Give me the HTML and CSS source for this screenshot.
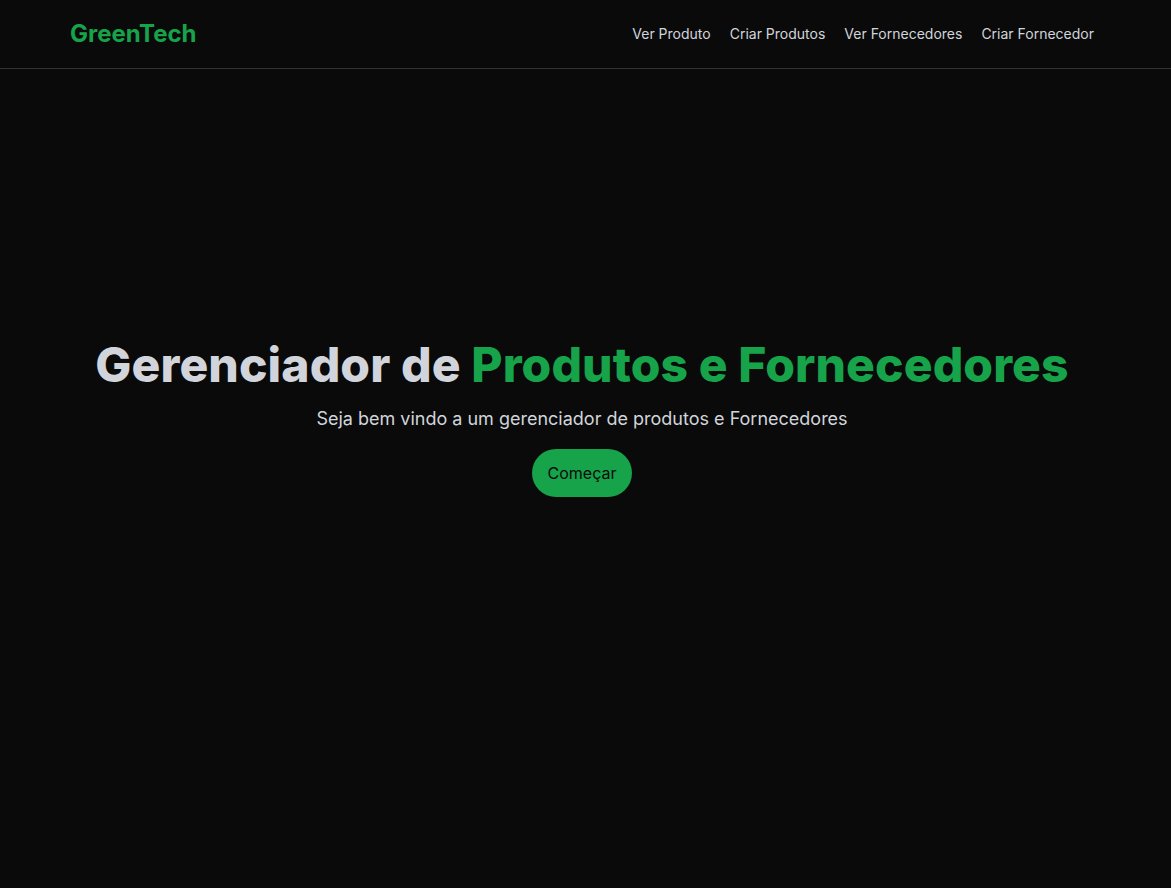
FILE: index.html
```html
<!DOCTYPE html>
<html lang="pt">
<head>
<meta charset="utf-8">
<title>GreenTech</title>
<link rel="stylesheet" href="styles.css">
</head>
<body>
<div class="page">
  <header class="header">
    <a class="logo" href="#">GreenTech</a>
    <nav class="nav">
      <a href="#">Ver Produto</a>
      <a href="#">Criar Produtos</a>
      <a href="#">Ver Fornecedores</a>
      <a href="#">Criar Fornecedor</a>
    </nav>
  </header>
  <main class="hero">
    <h1 class="title">Gerenciador de <span class="accent">Produtos e Fornecedores</span></h1>
    <p class="subtitle">Seja bem vindo a um gerenciador de produtos e Fornecedores</p>
    <a class="btn" href="#">Começar</a>
  </main>
</div>
</body>
</html>
```

FILE: styles.css
```css
* { box-sizing: border-box; }
html, body { margin: 0; padding: 0; }
body {
  background: #0a0a0a;
  color: #d1d5db;
  font-family: Inter, "Noto Sans", sans-serif;
  min-height: 100vh;
}
a { text-decoration: none; color: inherit; }
.page {
  margin-right: 7px;
}
.header {
  height: 69px;
  display: flex;
  align-items: center;
  justify-content: space-between;
  padding: 0 77px 0 70px;
  border-bottom: 1px solid #333333;
  margin-right: -7px;
}
.logo {
  font-weight: 700;
  font-size: 24px;
  color: #16a34a;
  padding-bottom: 2px;
}
.nav {
  display: flex;
  gap: 19px;
  font-size: 14px;
  color: #d1d5db;
  padding-bottom: 2px;
}
.hero {
  height: 819px;
  display: flex;
  flex-direction: column;
  align-items: center;
  padding-top: 272px;
  text-align: center;
}
.title {
  margin: 0;
  font-size: 48px;
  line-height: 48px;
  font-weight: 800;
  letter-spacing: 0.1px;
  color: #d1d5db;
}
.accent { color: #16a34a; }
.subtitle {
  margin: 16px 0 0;
  font-size: 18px;
  line-height: 28px;
}
.btn {
  margin-top: 16px;
  background: #16a34a;
  color: #0a0a0a;
  font-size: 16px;
  line-height: 24px;
  padding: 12px 16px;
  border-radius: 9999px;
}
```
